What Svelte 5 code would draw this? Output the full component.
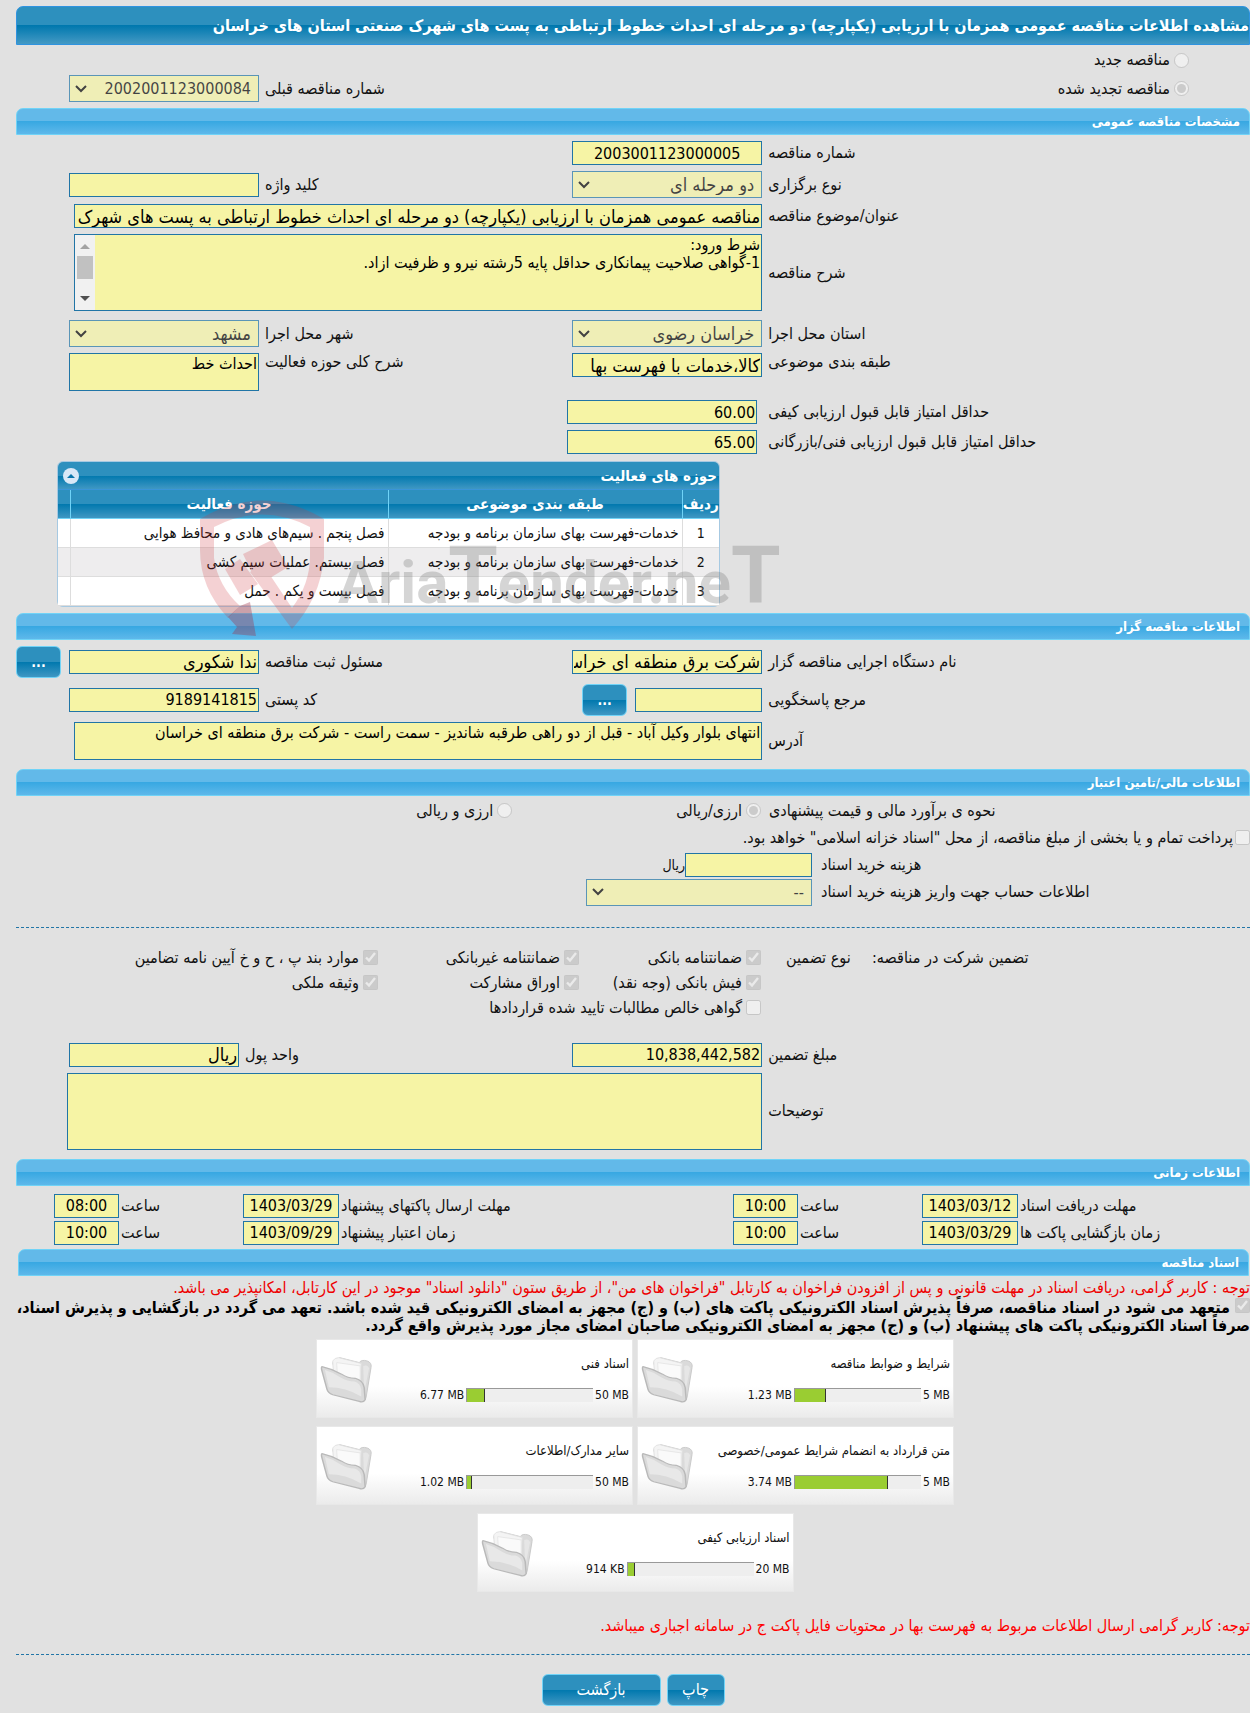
<script lang="ts">
	interface DocFile {
		title: string;
		used: string;
		limit: string;
		percent: number;
	}

	const tenderTitle =
		'مناقصه عمومی همزمان با ارزیابی (یکپارچه) دو مرحله ای احداث خطوط ارتباطی به پست های شهرک صنعتی استان های خراسان';

	const conditions = 'شرط ورود:\n1-گواهی صلاحیت پیمانکاری حداقل پایه 5رشته نیرو و ظرفیت ازاد.';
	const scope = 'احداث خط';
	const address =
		'انتهای بلوار وکیل آباد - قبل از دو راهی طرقبه شاندیز - سمت راست - شرکت برق منطقه ای خراسان';

	const activities = [
		{ category: 'خدمات-فهرست بهای سازمان برنامه و بودجه', field: 'فصل پنجم . سیم‌های هادی و محافظ هوایی' },
		{ category: 'خدمات-فهرست بهای سازمان برنامه و بودجه', field: 'فصل بیستم. عملیات سیم کشی' },
		{ category: 'خدمات-فهرست بهای سازمان برنامه و بودجه', field: 'فصل بیست و یکم . حمل' }
	];

	const guarantees = [
		{ label: 'ضمانتنامه بانکی', checked: true },
		{ label: 'ضمانتنامه غیربانکی', checked: true },
		{ label: 'موارد بند پ ، ح و خ آیین نامه تضامین', checked: true },
		{ label: 'فیش بانکی (وجه نقد)', checked: true },
		{ label: 'اوراق مشارکت', checked: true },
		{ label: 'وثیقه ملکی', checked: true },
		{ label: 'گواهی خالص مطالبات تایید شده قراردادها', checked: false }
	];

	const schedule = [
		{ label: 'مهلت دریافت اسناد', date: '1403/03/12', time: '10:00' },
		{ label: 'مهلت ارسال پاکتهای پیشنهاد', date: '1403/03/29', time: '08:00' },
		{ label: 'زمان بازگشایی پاکت ها', date: '1403/03/29', time: '10:00' },
		{ label: 'زمان اعتبار پیشنهاد', date: '1403/09/29', time: '10:00' }
	];

	const files: DocFile[] = [
		{ title: 'شرایط و ضوابط مناقصه', used: '1.23 MB', limit: '5 MB', percent: 25 },
		{ title: 'اسناد فنی', used: '6.77 MB', limit: '50 MB', percent: 14 },
		{ title: 'متن قرارداد به انضمام شرایط عمومی/خصوصی', used: '3.74 MB', limit: '5 MB', percent: 74 },
		{ title: 'سایر مدارک/اطلاعات', used: '1.02 MB', limit: '50 MB', percent: 4 },
		{ title: 'اسناد ارزیابی کیفی', used: '914 KB', limit: '20 MB', percent: 6 }
	];
</script>

{#snippet folder()}
	<svg class="folder" viewBox="0 0 54 57" preserveAspectRatio="none" aria-hidden="true">
		<path d="M13 8 L20 2 L40 8 Q42 4 48 6 Q53 8 52 14 L47 50 Q46 56 41 54 L20 46 Z" fill="#dadada" stroke="#c6c6c6" />
		<path d="M13 6 Q15 2 19 2 L42 9 L40 40 L14 30 Z" fill="#f4f4f4" stroke="#e0e0e0" />
		<path d="M17 8 L41 12 L41 42 L18 32 Z" fill="#fafafa" stroke="#e6e6e6" />
		<path d="M44 12 Q49 10 50 15 L45 45 Z" fill="#e6e6e6" />
		<path d="M2 13 Q13 16 22 22 Q28 27 36 27 Q44 30 45 38 L46 53 Q44 57 40 55 L13 47 Q8 45 7 40 L2 18 Q1 14 2 13 Z" fill="#dadada" stroke="#b9b9b9" stroke-width="1.5" />
		<path d="M5 17 Q14 20 21 26 Q28 31 35 31 Q41 33 42 40 L42 49 Q26 38 9 38 Z" fill="#e8e8e8" />
	</svg>
{/snippet}

<main class="page" dir="rtl" lang="fa">
	<h1 class="page-title">مشاهده اطلاعات {tenderTitle}</h1>

	<section class="rows kind-rows">
		<div class="row">
			<label class="choice kind"><input type="radio" name="kind" disabled /> مناقصه جدید</label>
		</div>
		<div class="row">
			<label class="choice kind"><input type="radio" name="kind" checked disabled /> مناقصه تجدید شده</label>
			<label class="second" for="prev-number">شماره مناقصه قبلی</label>
			<select id="prev-number" class="numeric" disabled><option>2002001123000084</option></select>
		</div>
	</section>

	<h2>مشخصات مناقصه عمومی</h2>
	<section class="rows">
		<div class="row">
			<label for="number">شماره مناقصه</label>
			<input id="number" class="numeric centered" readonly value="2003001123000005" />
		</div>
		<div class="row">
			<label for="method">نوع برگزاری</label>
			<select id="method" disabled><option>دو مرحله ای</option></select>
			<label for="keyword">کلید واژه</label>
			<input id="keyword" readonly value="" />
		</div>
		<div class="row">
			<label for="subject">عنوان/موضوع مناقصه</label>
			<input id="subject" class="wide" readonly value={tenderTitle} />
		</div>
		<div class="row spaced">
			<label for="description">شرح مناقصه</label>
			<div class="wide scroll-box">
				<textarea id="description" readonly value={conditions}></textarea>
				<div class="scrollbar">
					<span class="arrow up"></span>
					<span class="thumb"></span>
					<span class="arrow down"></span>
				</div>
			</div>
		</div>
		<div class="row">
			<label for="province">استان محل اجرا</label>
			<select id="province" disabled><option>خراسان رضوی</option></select>
			<label for="city">شهر محل اجرا</label>
			<select id="city" disabled><option>مشهد</option></select>
		</div>
		<div class="row top spaced">
			<label for="category">طبقه بندی موضوعی</label>
			<input id="category" readonly value="کالا،خدمات با فهرست بها" />
			<label for="scope">شرح کلی حوزه فعالیت</label>
			<textarea id="scope" class="short" readonly value={scope}></textarea>
		</div>
		<div class="row score">
			<label for="quality">حداقل امتیاز قابل قبول ارزیابی کیفی</label>
			<input id="quality" class="numeric" readonly value="60.00" />
		</div>
		<div class="row score">
			<label for="technical">حداقل امتیاز قابل قبول ارزیابی فنی/بازرگانی</label>
			<input id="technical" class="numeric" readonly value="65.00" />
		</div>
	</section>

	<div class="activities">
		<div class="activities-title">
			<span>حوزه های فعالیت</span>
			<button type="button" class="collapse" aria-label="بستن"></button>
		</div>
		<table>
			<thead>
				<tr>
					<th class="index">ردیف</th>
					<th class="category">طبقه بندی موضوعی</th>
					<th class="field">حوزه فعالیت</th>
					<th></th>
				</tr>
			</thead>
			<tbody>
				{#each activities as activity, i}
					<tr>
						<td class="index">{i + 1}</td>
						<td>{activity.category}</td>
						<td>{activity.field}</td>
						<td></td>
					</tr>
				{/each}
			</tbody>
		</table>
		<svg class="watermark" viewBox="0 0 640 136" aria-hidden="true">
			<g fill="#d0343a" opacity="0.22">
				<path d="M0 19 Q62 -18 124 19 L124 58 Q120 98 92 129 L50 72 L62 63 L92 108 Q110 84 110 56 L110 27 Q62 2 14 27 L14 58 Q18 86 40 106 L28 118 Q0 88 0 50 Z" />
				<path d="M25 69 L40 59 L58 84 L40 95 Z" />
				<path d="M43 54 L72 40 L88 67 L70 78 L58 62 L54 77 Z" />
			</g>
			<path d="M28 117 L40 106 L50 102 L56 136 L32 134 L37 127 Z" fill="#a03048" opacity="0.36" />
			<text x="138" y="103" direction="ltr">Aria<tspan class="tall">T</tspan>ender.ne<tspan class="tall">T</tspan></text>
		</svg>
	</div>

	<h2>اطلاعات مناقصه گزار</h2>
	<section class="rows agency">
		<div class="row">
			<label for="agency">نام دستگاه اجرایی مناقصه گزار</label>
			<input id="agency" readonly value="شرکت برق منطقه ای خراسان" />
			<label for="officer">مسئول ثبت مناقصه</label>
			<input id="officer" readonly value="ندا شکوری" />
			<button type="button" class="more">...</button>
		</div>
		<div class="row">
			<label for="contact">مرجع پاسخگویی</label>
			<div class="lookup">
				<input id="contact" readonly value="" />
				<button type="button" class="more">...</button>
			</div>
			<label for="postal">کد پستی</label>
			<input id="postal" class="numeric" readonly value="9189141815" />
		</div>
		<div class="row">
			<label for="address">آدرس</label>
			<textarea id="address" class="wide short" readonly value={address}></textarea>
		</div>
	</section>

	<h2>اطلاعات مالی/تامین اعتبار</h2>
	<section class="finance">
		<div class="row estimate">
			<span class="caption">نحوه ی برآورد مالی و قیمت پیشنهادی</span>
			<div class="choices">
				<label class="choice"><input type="radio" name="currency" checked disabled /> ارزی/ریالی</label>
				<label class="choice"><input type="radio" name="currency" disabled /> ارزی و ریالی</label>
			</div>
		</div>
		<label class="choice treasury">
			<input type="checkbox" disabled /> پرداخت تمام و یا بخشی از مبلغ مناقصه، از محل "اسناد خزانه اسلامی" خواهد بود.
		</label>
		<div class="cost">
			<label for="doc-cost">هزینه خرید اسناد</label>
			<div class="money"><input id="doc-cost" readonly value="" /><span>ریال</span></div>
			<label for="account">اطلاعات حساب جهت واریز هزینه خرید اسناد</label>
			<select id="account" class="numeric" disabled><option>--</option></select>
		</div>
	</section>
	<hr />

	<section class="guarantees">
		<span class="caption">تضمین شرکت در مناقصه:</span>
		<span class="caption type">نوع تضمین</span>
		<div class="guarantee-list">
			{#each guarantees as item}
				<label class="choice"><input type="checkbox" checked={item.checked} disabled /> {item.label}</label>
			{/each}
		</div>
	</section>
	<section class="rows amounts">
		<div class="row">
			<label for="amount">مبلغ تضمین</label>
			<input id="amount" class="numeric" readonly value="10,838,442,582" />
			<label class="unit-label" for="unit">واحد پول</label>
			<input id="unit" class="unit" readonly value="ریال" />
		</div>
		<div class="row">
			<label for="notes">توضیحات</label>
			<textarea id="notes" class="wide notes" readonly></textarea>
		</div>
	</section>

	<h2>اطلاعات زمانی</h2>
	<section class="schedule">
		{#each schedule as item, i}
			<label for="date-{i}">{item.label}</label>
			<input id="date-{i}" class="numeric centered" readonly value={item.date} />
			<label for="time-{i}">ساعت</label>
			<input id="time-{i}" class="numeric centered" readonly value={item.time} />
		{/each}
	</section>

	<h2 class="docs-title">اسناد مناقصه</h2>
	<p class="notice">
		توجه : کاربر گرامی، دریافت اسناد در مهلت قانونی و پس از افزودن فراخوان به کارتابل "فراخوان های من"، از طریق ستون "دانلود اسناد" موجود در این کارتابل، امکانپذیر می باشد.
	</p>
	<label class="pledge">
		<input type="checkbox" checked disabled />
		متعهد می شود در اسناد مناقصه، صرفاً پذیرش اسناد الکترونیکی پاکت های (ب) و (ج) مجهز به امضای الکترونیکی قید شده باشد. تعهد می گردد در بازگشایی و پذیرش اسناد، صرفاً اسناد الکترونیکی پاکت های پیشنهاد (ب) و (ج) مجهز به امضای الکترونیکی صاحبان امضای مجاز مورد پذیرش واقع گردد.
	</label>

	<div class="files">
		{#each files as file}
			<article class="file">
				<h3>{file.title}</h3>
				<div class="usage" dir="ltr">
					<span class="used">{file.used}</span>
					<div class="meter"><div class="fill" style="width: {file.percent}%"></div></div>
					<span class="limit">{file.limit}</span>
				</div>
				{@render folder()}
			</article>
		{/each}
	</div>

	<p class="notice bright">توجه: کاربر گرامی ارسال اطلاعات مربوط به فهرست بها در محتویات فایل پاکت ج در سامانه اجباری میباشد.</p>
	<hr />
	<div class="actions">
		<button type="button">چاپ</button>
		<button type="button" class="back">بازگشت</button>
	</div>
</main>

<style>
	:global(body) {
		background: #e1e1e1;
		overflow-x: hidden;
	}

	.page {
		--line: #2175a6;
		--yellow: #f6f4a5;
		padding: 6px 0 7px 16px;
		font-family: 'DejaVu Sans Condensed', 'DejaVu Sans', sans-serif;
		font-size: 16px;
		line-height: 18px;
		color: #111;
	}

	.page * {
		box-sizing: border-box;
	}

	h1,
	h2,
	h3,
	p {
		margin: 0;
	}

	.page-title {
		height: 39px;
		border: 1px solid #2f93e0;
		border-radius: 7px 7px 0 0;
		background: linear-gradient(#2d90be 50%, #0078ae 50%, #4499c4);
		color: #fff;
		font-size: 16px;
		line-height: 37px;
		white-space: nowrap;
		overflow: hidden;
	}

	h2 {
		height: 27px;
		padding: 0 9px;
		border: 1px solid #70d3f7;
		border-radius: 7px 7px 0 0;
		background: linear-gradient(#62b9e9 48%, #38a8e2 50%, #5eb8ea);
		color: #fff;
		font-size: 13px;
		line-height: 26px;
	}

	input:not([type]),
	select,
	textarea {
		width: 100%;
		min-width: 0;
		margin: 0;
		border: 1px solid var(--line);
		border-radius: 0;
		background-color: var(--yellow);
		color: #000;
		font-family: inherit;
		font-size: 18px;
		outline: none;
	}

	input:not([type]) {
		height: 24px;
		padding: 0 1px;
	}

	select {
		appearance: none;
		height: 27px;
		padding: 0 7px;
		background-image: url("data:image/svg+xml,%3Csvg xmlns='http://www.w3.org/2000/svg' viewBox='0 0 12 8'%3E%3Cpath d='M1 1l5 5 5-5' fill='none' stroke='%23000' stroke-width='2'/%3E%3C/svg%3E");
		background-position: 5px center;
		background-repeat: no-repeat;
		background-size: 12px 8px;
		opacity: 0.7;
	}

	textarea {
		display: block;
		padding: 1px;
		font-size: 16px;
		line-height: 18px;
		resize: none;
		overflow: hidden;
	}

	input.numeric:not([type]),
	select.numeric {
		font-size: 16px;
	}

	input.centered {
		text-align: center;
	}

	input[type='radio'],
	input[type='checkbox'] {
		flex-shrink: 0;
		width: 15px;
		height: 15px;
		margin: 0;
	}

	.rows {
		display: grid;
		gap: 6px;
		padding: 6px 0 7px 53px;
	}

	.row {
		display: grid;
		grid-template-columns: minmax(0, 8fr) 190px minmax(0, 5fr) 190px;
		column-gap: 6px;
		align-items: center;
	}

	.row > label,
	.caption {
		text-align: end;
		white-space: nowrap;
	}

	.row.top {
		align-items: start;
	}

	.row.spaced {
		margin-bottom: 3px;
	}

	.kind-rows {
		gap: 2px;
		padding: 2px 0 6px 53px;
	}

	.kind-rows .row {
		min-height: 26px;
	}

	.row > .second {
		grid-column: 3;
	}

	.choice {
		display: flex;
		align-items: center;
		gap: 4px;
		white-space: nowrap;
	}

	.row > .kind {
		padding-right: 61px;
	}

	.wide {
		grid-column: 2 / -1;
		justify-self: start;
	}

	input.wide:not([type]),
	textarea.wide,
	.scroll-box {
		width: calc(100% - 5px);
	}

	.scroll-box {
		display: flex;
		height: 77px;
		border: 1px solid var(--line);
	}

	.scroll-box textarea {
		flex: 1;
		border: 0;
	}

	.scrollbar {
		display: flex;
		flex-direction: column;
		align-items: center;
		width: 20px;
		padding: 9px 0;
		background: #f1f1f1;
	}

	.arrow {
		border: 5px solid transparent;
	}

	.up {
		border-top: 0;
		border-bottom-color: #a3a3a3;
	}

	.down {
		margin-top: auto;
		border-bottom: 0;
		border-top-color: #505050;
	}

	.thumb {
		width: 16px;
		height: 23px;
		margin-top: 7px;
		background: #c1c1c1;
	}

	.short {
		height: 38px;
	}

	.row.score {
		grid-template-columns: minmax(0, 8fr) 190px minmax(0, 5fr) 175px;
		column-gap: 11px;
	}

	.activities {
		position: relative;
		width: 663px;
		margin: 0 auto 6px 41px;
		border: 1px solid #a6c9e2;
		border-radius: 6px;
	}

	.activities-title {
		display: flex;
		justify-content: space-between;
		align-items: center;
		height: 28px;
		padding: 0 2px 0 5px;
		border-bottom: 1px solid #3a95d8;
		border-radius: 5px 5px 0 0;
		background: linear-gradient(#2d90be 50%, #0078ae 50%, #3f97c3);
		color: #fff;
		font-size: 15px;
		font-weight: bold;
	}

	.collapse {
		display: grid;
		place-items: center;
		width: 16px;
		height: 16px;
		padding: 0;
		border: 0;
		border-radius: 50%;
		background: #d9e8f7;
	}

	.collapse::before {
		content: '';
		border: 4px solid transparent;
		border-top: 0;
		border-bottom-color: #0b75ab;
	}

	table {
		width: 100%;
		table-layout: fixed;
		border-collapse: collapse;
		background: #fff;
	}

	th {
		height: 28px;
		padding: 0;
		border-left: 1px solid #70d3f7;
		border-bottom: 1px solid #70d3f7;
		background: linear-gradient(#2d90be 50%, #0078ae 50%, #3f97c3);
		color: #fff;
		font-size: 15px;
		white-space: nowrap;
	}

	td {
		height: 29px;
		padding: 0 3px;
		border-left: 1px solid #ddd;
		border-bottom: 1px solid #ddd;
		font-size: 15px;
		white-space: nowrap;
	}

	tbody tr:nth-child(2) {
		background: #eeedee;
	}

	th:last-child,
	td:last-child {
		border-left: 0;
	}

	.index {
		width: 37px;
		text-align: center;
	}

	td.index {
		font-size: 14px;
	}

	th.category {
		width: 294px;
	}

	th.field {
		width: 318px;
	}

	.watermark {
		position: absolute;
		z-index: 1;
		top: 38px;
		left: 142px;
		width: 640px;
		height: 136px;
		pointer-events: none;
	}

	.watermark text {
		font-family: Roboto, sans-serif;
		font-size: 60px;
		font-weight: bold;
		fill: #777;
		opacity: 0.3;
	}

	.watermark .tall {
		font-size: 80px;
	}

	button {
		border: 1px solid #70d3f7;
		border-radius: 6px;
		background: linear-gradient(#2d90be 50%, #0078ae 50%, #3f97c3);
		color: #fff;
		font-family: inherit;
		font-size: 16px;
	}

	.more {
		width: 45px;
		height: 32px;
		padding: 0;
		font-size: 14px;
		font-weight: bold;
	}

	.agency {
		padding: 6px 0 9px;
	}

	.agency .row {
		grid-template-columns: minmax(0, 8fr) 190px minmax(0, 5fr) 190px 47px;
	}

	.agency .row > .more {
		justify-self: end;
	}

	.agency .wide {
		grid-column: 2 / 5;
	}

	.lookup {
		display: flex;
		align-items: center;
		gap: 8px;
	}

	.lookup input:not([type]) {
		width: 127px;
	}

	.row.estimate {
		grid-template-columns: minmax(0, 481px) 1fr;
		column-gap: 8px;
		height: 30px;
	}

	.choices {
		display: flex;
		gap: 164px;
	}

	.treasury {
		height: 24px;
		gap: 2px;
	}

	.cost {
		display: grid;
		grid-template-columns: minmax(0, 429px) 226px;
		gap: 2px 9px;
		align-items: center;
		padding: 3px 0 21px;
	}

	.cost > label {
		text-align: end;
	}

	.money {
		display: flex;
		align-items: center;
		font-size: 14px;
	}

	.money input:not([type]) {
		width: 127px;
	}

	hr {
		margin: 0;
		border: 0;
		border-top: 1px dashed var(--line);
	}

	.guarantees {
		display: grid;
		grid-template-columns: 378px 86px 1fr;
		line-height: 25px;
		padding: 17px 0 23px;
	}

	.guarantee-list {
		display: grid;
		grid-template-columns: 182px 201px 1fr;
		padding-right: 25px;
	}

	.amounts {
		padding: 0 0 9px 53px;
	}

	.unit:not([type]) {
		width: 170px;
		justify-self: end;
	}

	.row > .unit-label {
		margin-left: -20px;
	}

	textarea.notes {
		width: calc(100% + 2px);
		height: 77px;
	}

	.schedule {
		display: grid;
		grid-template-columns: 23fr 96px 12fr 65px 39fr 96px 12fr 65px;
		gap: 3px 2px;
		align-items: center;
		padding: 8px 0 4px 38px;
	}

	.schedule label {
		text-align: end;
	}

	.docs-title {
		margin: 0 1px 0 2px;
	}

	.notice {
		height: 22px;
		color: #e00;
		line-height: 24px;
		white-space: nowrap;
		overflow: hidden;
	}

	.pledge {
		display: block;
		height: 41px;
		color: #000;
		font-weight: bold;
	}

	.files {
		display: flex;
		flex-wrap: wrap;
		justify-content: center;
		gap: 8px 4px;
		width: 640px;
		max-width: 100%;
		margin: 0 295px 0 auto;
	}

	.file {
		display: grid;
		grid-template-columns: 1fr 62px;
		grid-template-rows: 48px 31px;
		width: 317px;
		height: 79px;
		padding: 0 3px;
		border: 1px solid #e8e8e8;
		background: linear-gradient(#fff 60%, #ebebeb);
	}

	h3 {
		font-size: 13px;
		font-weight: normal;
		line-height: 48px;
		white-space: nowrap;
	}

	.usage {
		grid-row: 2;
		display: flex;
		justify-content: flex-end;
		align-items: flex-start;
		gap: 2px;
		font-size: 12px;
		line-height: 15px;
	}

	.meter {
		width: 127px;
		height: 14px;
		border-top: 1px solid #999;
		border-left: 1px solid #999;
		background: #eee;
	}

	.fill {
		height: 100%;
		border-right: 1px solid #333;
		background: #9acd32;
	}

	.folder {
		grid-column: 2;
		grid-row: 1 / 3;
		justify-self: end;
		align-self: center;
		width: 53px;
		height: 47px;
	}

	.bright {
		height: 62px;
		color: #f00;
		line-height: 68px;
	}

	.actions {
		display: flex;
		justify-content: center;
		gap: 6px;
		padding-top: 19px;
	}

	.actions button {
		width: 58px;
		height: 32px;
		padding: 0;
	}

	.actions .back {
		width: 119px;
	}
</style>
